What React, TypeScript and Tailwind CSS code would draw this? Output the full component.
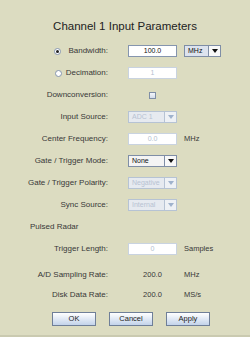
import React from 'react';

const font = { fontFamily: '"Liberation Sans", Arial, sans-serif' };

function Arrow({ disabled }: { disabled?: boolean }) {
  return (
    <svg width="6" height="4" viewBox="0 0 6 4">
      <path d="M0 0 L6 0 L3 4 Z" fill={disabled ? '#9fb2cc' : '#111'} />
    </svg>
  );
}

function Select({ value, disabled, w = 49, tint }: { value: string; disabled?: boolean; w?: number; tint?: boolean }) {
  return (
    <div
      className={`flex shrink-0 h-[12px] border ${disabled ? 'border-[#b6c3d4] bg-[#e6eaf0]' : 'border-[#7f8ea6] bg-[#f4f4f4]'}`}
      style={{ width: w }}
    >
      <div
        className={`flex-1 pl-[3px] text-[7px] leading-[10px] ${disabled ? 'text-[#b7c2d2]' : 'text-[#111]'} ${tint ? 'bg-[#dde3ee]' : ''}`}
      >
        {value}
      </div>
      <div
        className={`w-[12px] flex items-center justify-center border-l ${disabled ? 'border-[#b6c3d4] bg-[#eef1f5]' : 'border-[#7f8ea6] bg-[#f8f8f8]'}`}
      >
        <Arrow disabled={disabled} />
      </div>
    </div>
  );
}

function Field({ value, disabled }: { value: string; disabled?: boolean }) {
  return (
    <div
      className={`w-[49px] shrink-0 h-[12px] bg-white border text-center text-[7px] leading-[10px] ${disabled ? 'border-[#c9d3e0] text-[#b3bfd0]' : 'border-[#8595ae] text-[#111]'}`}
    >
      {value}
    </div>
  );
}

function Row({ label, children, unit, extra, h = 22, lead }: { label: string; children?: React.ReactNode; unit?: string; extra?: React.ReactNode; h?: number; lead?: React.ReactNode }) {
  return (
    <div className="flex items-center" style={{ height: h }}>
      <div className="w-[108px] shrink-0 flex items-center justify-end text-[8px] text-[#383838]">
        {lead}
        <span>{label}</span>
      </div>
      <div className="ml-[20px] w-[49px] shrink-0 flex items-center">{children}</div>
      {unit && <span className="ml-[7px] text-[7.5px] text-[#383838]">{unit}</span>}
      {extra && <div className="ml-[7px]">{extra}</div>}
    </div>
  );
}

function Radio({ checked }: { checked?: boolean }) {
  return (
    <span className="w-[7px] h-[7px] rounded-full border border-[#8595ae] bg-white flex items-center justify-center">
      {checked && <span className="w-[3px] h-[3px] rounded-full bg-[#222]" />}
    </span>
  );
}

export default function App() {
  return (
    <div className="w-[250px] h-[337px] bg-[#dcdcc1] border-b-2 border-[#cacab0] overflow-hidden" style={font}>
      <div className="pt-[20px] h-[40px]">
        <div className="text-center text-[11.5px] leading-[13px] text-[#222]">Channel 1 Input Parameters</div>
      </div>

      <Row label="Bandwidth:" lead={<span className="mr-[7px]"><Radio checked /></span>} extra={<Select value="MHz" w={37} tint />}>
        <Field value="100.0" />
      </Row>
      <Row label="Decimation:" lead={<span className="mr-[4px]"><Radio /></span>}>
        <Field value="1" disabled />
      </Row>
      <Row label="Downconversion:">
        <div className="ml-[21px] w-[7px] h-[7px] border border-[#7f8ea6] bg-gradient-to-b from-[#f4f6fa] to-[#d4dcea]" />
      </Row>
      <Row label="Input Source:">
        <Select value="ADC 1" disabled />
      </Row>
      <Row label="Center Frequency:" unit="MHz">
        <Field value="0.0" disabled />
      </Row>
      <Row label="Gate / Trigger Mode:">
        <Select value="None" />
      </Row>
      <Row label="Gate / Trigger Polarity:">
        <Select value="Negative" disabled />
      </Row>
      <Row label="Sync Source:">
        <Select value="Internal" disabled />
      </Row>
      <div className="h-[22px] flex items-center pl-[30px] text-[8px] text-[#383838]">Pulsed Radar</div>
      <Row label="Trigger Length:" unit="Samples">
        <Field value="0" disabled />
      </Row>

      <div className="h-[4px]" />
      <Row label="A/D Sampling Rate:" unit="MHz" h={22}>
        <div className="w-full text-center text-[7.5px] text-[#383838]">200.0</div>
      </Row>
      <Row label="Disk Data Rate:" unit="MS/s" h={18}>
        <div className="w-full text-center text-[7.5px] text-[#383838]">200.0</div>
      </Row>

      <div className="flex gap-[13px] pl-[52px] mt-[8px]">
        {['OK', 'Cancel', 'Apply'].map((b) => (
          <div
            key={b}
            className="w-[44px] h-[14px] border border-[#6f7f98] bg-gradient-to-b from-[#ffffff] to-[#c3d3ea] text-center text-[7.5px] leading-[12px] text-[#222]"
          >
            {b}
          </div>
        ))}
      </div>
    </div>
  );
}
